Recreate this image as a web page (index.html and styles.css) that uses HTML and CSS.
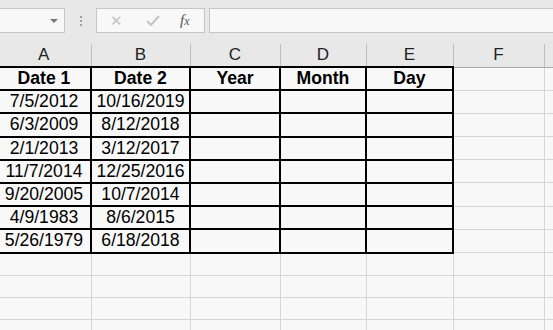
FILE: index.html
```html
<!DOCTYPE html>
<html>
<head>
    <title>Dates sheet</title>
    <link rel="stylesheet" href="styles.css">
</head>
<body>
<div class="toolbar">
    <div class="name-box">
        <span class="caret"></span>
    </div>
    <div class="grip">
        <span></span><span></span><span></span>
    </div>
    <div class="fx-buttons">
        <span class="fx-cancel">&#x2715;</span>
        <span class="fx-enter">
            <svg width="14" height="11" viewBox="0 0 14 11"><path d="M1 6 L5 10 L13 1" fill="none" stroke="#c4c4c4" stroke-width="2"/></svg>
        </span>
        <span class="fx-label"><i>f</i><i class="fx-x">x</i></span>
    </div>
    <div class="formula-bar"></div>
</div>

<div class="sheet-wrap">
<table class="sheet">
    <colgroup>
        <col class="col-a">
        <col class="col-b">
        <col class="col-c">
        <col class="col-d">
        <col class="col-e">
        <col class="col-f">
        <col class="col-g">
    </colgroup>
    <thead>
        <tr class="letters">
            <th>A</th><th>B</th><th>C</th><th>D</th><th>E</th><th>F</th><th></th>
        </tr>
    </thead>
    <tbody>
        <tr class="titles">
            <td class="box">Date 1</td><td class="box">Date 2</td><td class="box">Year</td><td class="box">Month</td><td class="box">Day</td><td></td><td></td>
        </tr>
        <tr><td class="box">7/5/2012</td><td class="box">10/16/2019</td><td class="box"></td><td class="box"></td><td class="box"></td><td></td><td></td></tr>
        <tr><td class="box">6/3/2009</td><td class="box">8/12/2018</td><td class="box"></td><td class="box"></td><td class="box"></td><td></td><td></td></tr>
        <tr><td class="box">2/1/2013</td><td class="box">3/12/2017</td><td class="box"></td><td class="box"></td><td class="box"></td><td></td><td></td></tr>
        <tr><td class="box">11/7/2014</td><td class="box">12/25/2016</td><td class="box"></td><td class="box"></td><td class="box"></td><td></td><td></td></tr>
        <tr><td class="box">9/20/2005</td><td class="box">10/7/2014</td><td class="box"></td><td class="box"></td><td class="box"></td><td></td><td></td></tr>
        <tr><td class="box">4/9/1983</td><td class="box">8/6/2015</td><td class="box"></td><td class="box"></td><td class="box"></td><td></td><td></td></tr>
        <tr><td class="box">5/26/1979</td><td class="box">6/18/2018</td><td class="box"></td><td class="box"></td><td class="box"></td><td></td><td></td></tr>
        <tr><td></td><td></td><td></td><td></td><td></td><td></td><td></td></tr>
        <tr><td></td><td></td><td></td><td></td><td></td><td></td><td></td></tr>
        <tr><td></td><td></td><td></td><td></td><td></td><td></td><td></td></tr>
        <tr><td></td><td></td><td></td><td></td><td></td><td></td><td></td></tr>
    </tbody>
</table>
</div>
</body>
</html>
```

FILE: styles.css
```css
/* Page */
body {
    margin: 0;
    padding: 0;
    height: 330px;
    overflow: hidden;
    font-family: "Liberation Sans", Arial, sans-serif;
    background-color: #f8f8f8;
}

/* Formula bar strip */
.toolbar {
    display: flex;
    align-items: flex-start;
    height: 44px;
    padding-top: 8px;
    box-sizing: border-box;
    background-color: #e8e8e8;
}

.name-box {
    display: flex;
    align-items: center;
    justify-content: flex-end;
    width: 66px;
    height: 25px;
    margin-left: -1px;
    padding-right: 6px;
    box-sizing: border-box;
    background-color: #f8f8f8;
    border: 1px solid #c6c6c6;
}

.caret {
    width: 0;
    height: 0;
    border-left: 4px solid transparent;
    border-right: 4px solid transparent;
    border-top: 4px solid #777;
}

.grip {
    display: flex;
    flex-direction: column;
    gap: 2px;
    margin: 8px 14px 0 15px;
}

.grip span {
    width: 2px;
    height: 2px;
    background-color: #a0a0a0;
}

.fx-buttons {
    display: flex;
    align-items: center;
    width: 109px;
    height: 25px;
    box-sizing: border-box;
    background-color: #f8f8f8;
    border: 1px solid #c6c6c6;
}

.fx-cancel {
    width: 15px;
    margin-left: 13px;
    font-size: 15px;
    color: #c4c4c4;
}

.fx-enter {
    display: flex;
    margin-left: 21px;
}

.fx-label {
    margin-left: 20px;
    font-family: "Liberation Serif", serif;
    font-size: 15px;
    color: #555;
}

.fx-x {
    font-size: 12px;
}

.formula-bar {
    flex: 1;
    height: 25px;
    margin-left: 4px;
    margin-right: -2px;
    box-sizing: border-box;
    background-color: #f8f8f8;
    border: 1px solid #c6c6c6;
}

/* Grid */
.sheet-wrap {
    overflow: hidden;
    height: 286px;
}

.sheet {
    table-layout: fixed;
    border-collapse: collapse;
    margin-left: -4px;
    width: 557px;
}

.col-a { width: 94px; }
.col-b { width: 99px; }
.col-c { width: 90px; }
.col-d { width: 86px; }
.col-e { width: 87px; }
.col-f { width: 91px; }
.col-g { width: 10px; }

.sheet th {
    height: 22px;
    padding: 0;
    font-size: 17px;
    font-weight: normal;
    color: #222;
    background-color: #e8e8e8;
    border-right: 1px solid #bdbdbd;
    border-bottom: 1px solid #ababab;
}

.sheet td {
    height: 21px;
    padding: 0;
    font-size: 17.6px;
    text-align: center;
    white-space: nowrap;
    overflow: hidden;
    border: 1px solid #d6d6d6;
}

.sheet td.box {
    border: 2px solid #000;
    height: 21.2px;
}

.titles td {
    font-weight: bold;
}
```
